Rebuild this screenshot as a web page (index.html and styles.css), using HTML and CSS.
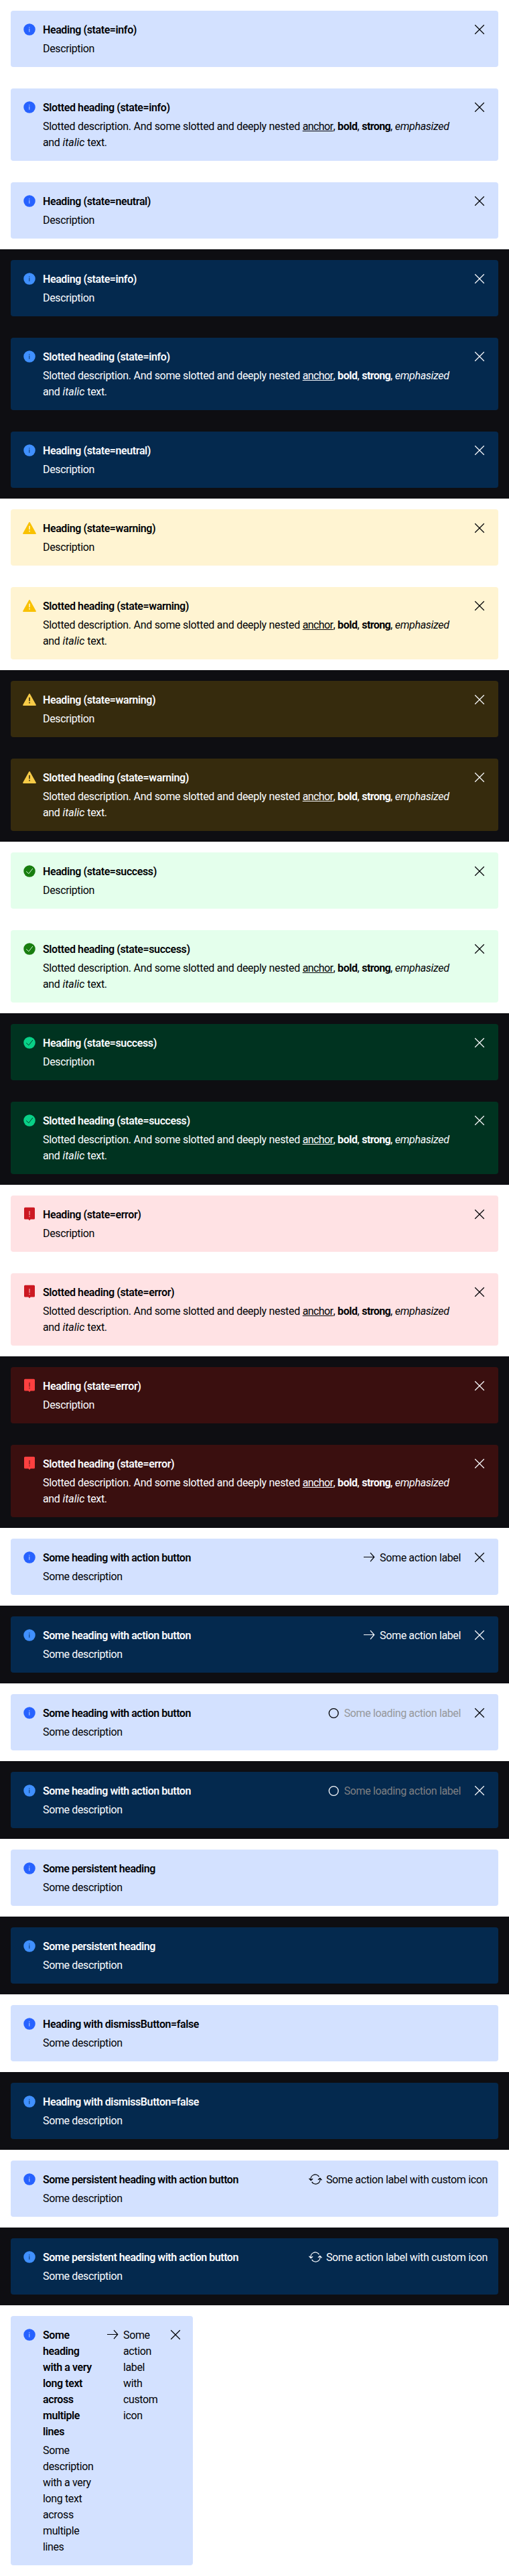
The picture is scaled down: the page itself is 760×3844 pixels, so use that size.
FILE: index.html
```
<!DOCTYPE html>
<html lang="en">
<head>
<meta charset="utf-8">
<title>Inline notification</title>
<link rel="stylesheet" href="styles.css">
</head>
<body>
<svg class="sprite" aria-hidden="true">
  <symbol id="info" viewBox="0 0 24 24"><circle cx="12" cy="12" r="8.75" fill="currentColor"/><path class="cut" d="M11.8 8.3v1.2M11.8 10.7v5"/></symbol>
  <symbol id="warning" viewBox="0 0 24 24"><path d="M12 3.1c.4 0 .7.2.9.6l8.9 16c.3.6 0 1.2-.7 1.2H2.9c-.7 0-1-.6-.7-1.2l8.9-16c.2-.4.5-.6.9-.6z" fill="currentColor"/><path class="cut thick" d="M12 8.7v5.6M12 15.8v1.7"/></symbol>
  <symbol id="success" viewBox="0 0 24 24"><circle cx="12" cy="12" r="8.75" fill="currentColor"/><path class="cut" d="M7.2 12.3l3.7 3.4L16.9 8"/></symbol>
  <symbol id="error" viewBox="0 0 24 24"><path d="M5.5 1.8h13A1.5 1.5 0 0 1 20 3.3v14.6a1.5 1.5 0 0 1-1.5 1.5h-4.9L12 21.2l-1.6-1.8H5.5A1.5 1.5 0 0 1 4 17.9V3.3a1.5 1.5 0 0 1 1.5-1.5z" fill="currentColor"/><path class="cut" d="M12 7.1v6.2M12 14.7v1.5"/></symbol>
  <symbol id="close" viewBox="0 0 24 24"><path class="line" d="M5.2 5.2l13.6 13.6M18.8 5.2L5.2 18.8"/></symbol>
  <symbol id="arrow" viewBox="0 0 24 24"><path class="line" d="M14 5.2l5.7 6.3-5.7 6.6"/><path class="line crisp" d="M4 11.5h15.6"/></symbol>
  <symbol id="refresh" viewBox="0 0 24 24"><path class="line" d="M2.5 10.8L5.2 13.6l2.9-2.4M5.2 13.2A6.7 6.7 0 0 1 17.4 8.1M21.5 13.2l-2.7-2.8-2.9 2.4M18.8 10.8A6.7 6.7 0 0 1 6.6 15.9"/></symbol>
  <symbol id="spinner" viewBox="0 0 24 24"><circle class="ring" cx="12.2" cy="12.5" r="6.9"/></symbol>
</svg>

<section class="light">
  <div class="note info"><svg class="icon state"><use href="#info"/></svg><div class="content"><h5>Heading (state=info)</h5><p>Description</p></div><svg class="icon"><use href="#close"/></svg></div>
  <div class="note info"><svg class="icon state"><use href="#info"/></svg><div class="content"><h5>Slotted heading (state=info)</h5><p>Slotted description. And some slotted and deeply nested <a>anchor</a>, <b>bold</b>, <strong>strong</strong>, <em>emphasized</em> and <i>italic</i> text.</p></div><svg class="icon"><use href="#close"/></svg></div>
  <div class="note info"><svg class="icon state"><use href="#info"/></svg><div class="content"><h5>Heading (state=neutral)</h5><p>Description</p></div><svg class="icon"><use href="#close"/></svg></div>
</section>
<section class="dark">
  <div class="note info"><svg class="icon state"><use href="#info"/></svg><div class="content"><h5>Heading (state=info)</h5><p>Description</p></div><svg class="icon"><use href="#close"/></svg></div>
  <div class="note info"><svg class="icon state"><use href="#info"/></svg><div class="content"><h5>Slotted heading (state=info)</h5><p>Slotted description. And some slotted and deeply nested <a>anchor</a>, <b>bold</b>, <strong>strong</strong>, <em>emphasized</em> and <i>italic</i> text.</p></div><svg class="icon"><use href="#close"/></svg></div>
  <div class="note info"><svg class="icon state"><use href="#info"/></svg><div class="content"><h5>Heading (state=neutral)</h5><p>Description</p></div><svg class="icon"><use href="#close"/></svg></div>
</section>

<section class="light">
  <div class="note warning"><svg class="icon state"><use href="#warning"/></svg><div class="content"><h5>Heading (state=warning)</h5><p>Description</p></div><svg class="icon"><use href="#close"/></svg></div>
  <div class="note warning"><svg class="icon state"><use href="#warning"/></svg><div class="content"><h5>Slotted heading (state=warning)</h5><p>Slotted description. And some slotted and deeply nested <a>anchor</a>, <b>bold</b>, <strong>strong</strong>, <em>emphasized</em> and <i>italic</i> text.</p></div><svg class="icon"><use href="#close"/></svg></div>
</section>
<section class="dark">
  <div class="note warning"><svg class="icon state"><use href="#warning"/></svg><div class="content"><h5>Heading (state=warning)</h5><p>Description</p></div><svg class="icon"><use href="#close"/></svg></div>
  <div class="note warning"><svg class="icon state"><use href="#warning"/></svg><div class="content"><h5>Slotted heading (state=warning)</h5><p>Slotted description. And some slotted and deeply nested <a>anchor</a>, <b>bold</b>, <strong>strong</strong>, <em>emphasized</em> and <i>italic</i> text.</p></div><svg class="icon"><use href="#close"/></svg></div>
</section>

<section class="light">
  <div class="note success"><svg class="icon state"><use href="#success"/></svg><div class="content"><h5>Heading (state=success)</h5><p>Description</p></div><svg class="icon"><use href="#close"/></svg></div>
  <div class="note success"><svg class="icon state"><use href="#success"/></svg><div class="content"><h5>Slotted heading (state=success)</h5><p>Slotted description. And some slotted and deeply nested <a>anchor</a>, <b>bold</b>, <strong>strong</strong>, <em>emphasized</em> and <i>italic</i> text.</p></div><svg class="icon"><use href="#close"/></svg></div>
</section>
<section class="dark">
  <div class="note success"><svg class="icon state"><use href="#success"/></svg><div class="content"><h5>Heading (state=success)</h5><p>Description</p></div><svg class="icon"><use href="#close"/></svg></div>
  <div class="note success"><svg class="icon state"><use href="#success"/></svg><div class="content"><h5>Slotted heading (state=success)</h5><p>Slotted description. And some slotted and deeply nested <a>anchor</a>, <b>bold</b>, <strong>strong</strong>, <em>emphasized</em> and <i>italic</i> text.</p></div><svg class="icon"><use href="#close"/></svg></div>
</section>

<section class="light">
  <div class="note error"><svg class="icon state"><use href="#error"/></svg><div class="content"><h5>Heading (state=error)</h5><p>Description</p></div><svg class="icon"><use href="#close"/></svg></div>
  <div class="note error"><svg class="icon state"><use href="#error"/></svg><div class="content"><h5>Slotted heading (state=error)</h5><p>Slotted description. And some slotted and deeply nested <a>anchor</a>, <b>bold</b>, <strong>strong</strong>, <em>emphasized</em> and <i>italic</i> text.</p></div><svg class="icon"><use href="#close"/></svg></div>
</section>
<section class="dark">
  <div class="note error"><svg class="icon state"><use href="#error"/></svg><div class="content"><h5>Heading (state=error)</h5><p>Description</p></div><svg class="icon"><use href="#close"/></svg></div>
  <div class="note error"><svg class="icon state"><use href="#error"/></svg><div class="content"><h5>Slotted heading (state=error)</h5><p>Slotted description. And some slotted and deeply nested <a>anchor</a>, <b>bold</b>, <strong>strong</strong>, <em>emphasized</em> and <i>italic</i> text.</p></div><svg class="icon"><use href="#close"/></svg></div>
</section>

<section class="light">
  <div class="note info"><svg class="icon state"><use href="#info"/></svg><div class="content"><h5 class="tight">Some heading with action button</h5><p>Some description</p></div><div class="action"><svg class="icon"><use href="#arrow"/></svg><span class="label">Some action label</span></div><svg class="icon"><use href="#close"/></svg></div>
</section>
<section class="dark">
  <div class="note info"><svg class="icon state"><use href="#info"/></svg><div class="content"><h5 class="tight">Some heading with action button</h5><p>Some description</p></div><div class="action"><svg class="icon"><use href="#arrow"/></svg><span class="label">Some action label</span></div><svg class="icon"><use href="#close"/></svg></div>
</section>
<section class="light">
  <div class="note info"><svg class="icon state"><use href="#info"/></svg><div class="content"><h5 class="tight">Some heading with action button</h5><p>Some description</p></div><div class="action loading"><svg class="icon"><use href="#spinner"/></svg><span class="label">Some loading action label</span></div><svg class="icon"><use href="#close"/></svg></div>
</section>
<section class="dark">
  <div class="note info"><svg class="icon state"><use href="#info"/></svg><div class="content"><h5 class="tight">Some heading with action button</h5><p>Some description</p></div><div class="action loading"><svg class="icon"><use href="#spinner"/></svg><span class="label">Some loading action label</span></div><svg class="icon"><use href="#close"/></svg></div>
</section>

<section class="light">
  <div class="note info"><svg class="icon state"><use href="#info"/></svg><div class="content"><h5 class="tight">Some persistent heading</h5><p>Some description</p></div></div>
</section>
<section class="dark">
  <div class="note info"><svg class="icon state"><use href="#info"/></svg><div class="content"><h5 class="tight">Some persistent heading</h5><p>Some description</p></div></div>
</section>
<section class="light">
  <div class="note info"><svg class="icon state"><use href="#info"/></svg><div class="content"><h5>Heading with dismissButton=false</h5><p>Some description</p></div></div>
</section>
<section class="dark">
  <div class="note info"><svg class="icon state"><use href="#info"/></svg><div class="content"><h5>Heading with dismissButton=false</h5><p>Some description</p></div></div>
</section>

<section class="light">
  <div class="note info"><svg class="icon state"><use href="#info"/></svg><div class="content"><h5 class="tight">Some persistent heading with action button</h5><p>Some description</p></div><div class="action custom"><svg class="icon"><use href="#refresh"/></svg><span class="label">Some action label with custom icon</span></div></div>
</section>
<section class="dark">
  <div class="note info"><svg class="icon state"><use href="#info"/></svg><div class="content"><h5 class="tight">Some persistent heading with action button</h5><p>Some description</p></div><div class="action custom"><svg class="icon"><use href="#refresh"/></svg><span class="label">Some action label with custom icon</span></div></div>
</section>

<section class="light">
  <div class="note info narrow"><svg class="icon state"><use href="#info"/></svg><div class="content"><h5>Some heading with a very long text across multiple lines</h5><p>Some description with a very long text across multiple lines</p></div><div class="action"><svg class="icon"><use href="#arrow"/></svg><span class="label">Some action label with custom icon</span></div><svg class="icon"><use href="#close"/></svg></div>
</section>
</body>
</html>
```
FILE: styles.css
```
* { box-sizing: border-box; }

body {
  margin: 0;
  font: 16px/24px Roboto, "Liberation Sans", sans-serif;
  letter-spacing: -0.37px;
}

.sprite { display: block; width: 0; height: 0; }

section {
  display: flex;
  flex-direction: column;
  gap: 32px;
  padding: 16px;
}

.light {
  --text: #010205;
  --muted: #96989b;
  background: #fff;
}

.dark {
  --text: #fbfcff;
  --muted: #7e7f82;
  background: #0e0e12;
}

.light .info { --surface: #d3e1ff; --state: #2762ff; }
.light .warning { --surface: #fff4d2; --state: #f9c100; }
.light .success { --surface: #e4ffec; --state: #197e10; }
.light .error { --surface: #ffe2e4; --state: #cc1922; }
.dark .info { --surface: #04294e; --state: #4090ff; }
.dark .warning { --surface: #362b0d; --state: #f7cb47; }
.dark .success { --surface: #003320; --state: #09d087; }
.dark .error { --surface: #3a0f0f; --state: #fc4040; }

.note {
  display: flex;
  align-items: flex-start;
  padding: 16px;
  border-radius: 4px;
  background: var(--surface);
  color: var(--text);
}

.icon {
  flex: none;
  display: block;
  width: 24px;
  height: 24px;
}

.note > .icon:last-child { margin-left: 16px; }

.state {
  margin-right: 8px;
  color: var(--state);
}

.cut {
  fill: none;
  stroke: var(--surface);
  stroke-width: 0.9;
}

.thick { stroke-width: 1.6; }

.line {
  fill: none;
  stroke: var(--text);
  stroke-width: 1.25;
}

.crisp { stroke-width: 1; }

.ring {
  fill: none;
  stroke: var(--text);
  stroke-width: 1.35;
}

.content {
  flex: 1;
  min-width: 0;
}

.content,
.label {
  padding-top: 1px;
  margin-bottom: -1px;
}

h5 {
  margin: 0 0 4px;
  font-size: 16px;
  line-height: 24px;
  font-weight: 600;
  letter-spacing: -0.4px;
}

.tight { letter-spacing: -0.48px; }

p {
  margin: 0;
}

p a {
  text-decoration: underline;
  letter-spacing: -0.6px;
}

p:has(a) {
  letter-spacing: -0.34px;
  word-spacing: 0.25px;
}

b { letter-spacing: -0.45px; }
strong { letter-spacing: -0.6px; }
em { letter-spacing: -0.3px; }
i { letter-spacing: 0; }

.action {
  display: flex;
  gap: 4px;
  margin-left: 16px;
}

.custom { letter-spacing: -0.35px; }

.loading .label { color: var(--muted); }

.narrow { width: 272px; }
.narrow .content { flex: none; width: 76px; }
.narrow .label { width: 50px; }
```
